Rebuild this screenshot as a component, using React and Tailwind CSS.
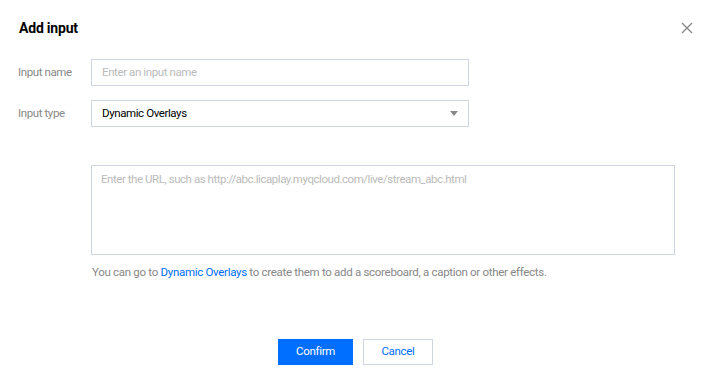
export default function App() {
  const font = { fontFamily: '"Roboto", "Liberation Sans", sans-serif' };
  return (
    <div className="w-[713px] h-[386px] bg-white relative" style={font}>
      <div className="pt-[19px] pl-[19px] pr-[20px] flex items-center justify-between h-[36px]">
        <div className="text-[14px] font-bold text-[#000] leading-[17px] pt-[1px] tracking-[-0.2px]">Add input</div>
      </div>
      <button className="absolute left-[680px] top-[21px] w-[14px] h-[14px] flex items-center justify-center">
        <svg width="12" height="12" viewBox="0 0 12 12">
          <path d="M1 1L11 11M11 1L1 11" stroke="#888" strokeWidth="1.4" />
        </svg>
      </button>
      <div className="pl-[18px] pt-[23px] flex flex-col gap-[14px]">
        <div className="flex items-center">
          <div className="w-[73px] text-[11.5px] tracking-[-0.4px] text-[#888]">Input name</div>
          <div className="w-[378px] h-[27px] border border-[#cfd5de] flex items-center px-[10px] text-[11.5px] tracking-[-0.4px] text-[#bbb]">
            Enter an input name
          </div>
        </div>
        <div className="flex items-center">
          <div className="w-[73px] text-[11.5px] tracking-[-0.4px] text-[#888]">Input type</div>
          <div className="w-[378px] h-[27px] border border-[#cfd5de] flex items-center justify-between pl-[10px] pr-[10px] text-[11.5px] tracking-[-0.4px] text-[#000]">
            <span>Dynamic Overlays</span>
            <svg width="8" height="5" viewBox="0 0 8 5">
              <path d="M0 0H8L4 5Z" fill="#888" />
            </svg>
          </div>
        </div>
      </div>
      <div className="pl-[91px] pt-[38px]">
        <div className="w-[584px] h-[90px] border border-[#cfd5de] px-[9px] pt-[5px] text-[11.5px] tracking-[-0.45px] text-[#bbb]">
          Enter the URL, such as http://abc.licaplay.myqcloud.com/live/stream_abc.html
        </div>
        <div className="pt-[9px] pl-[1px] text-[11.5px] tracking-[-0.3px] text-[#888] leading-[16px]">
          You can go to <span className="text-[#006eff]">Dynamic Overlays</span> to create them to add a scoreboard, a caption or other effects.
        </div>
      </div>
      <div className="flex justify-center gap-[10px] pt-[59px] pr-[2px]">
        <button className="w-[75px] h-[26px] bg-[#006eff] text-white text-[11.5px] tracking-[-0.3px]">Confirm</button>
        <button className="w-[70px] h-[26px] border border-[#cfd5de] text-[#006eff] text-[11.5px] tracking-[-0.3px] bg-white">Cancel</button>
      </div>
    </div>
  );
}
